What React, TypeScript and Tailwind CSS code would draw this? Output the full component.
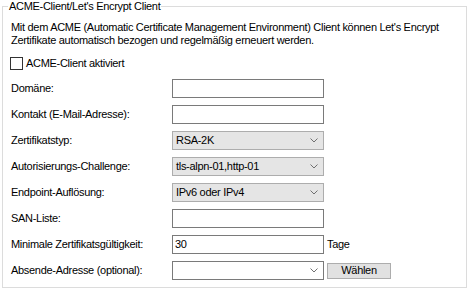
const font = "font-['Liberation_Sans',Arial,sans-serif] text-[11px] tracking-[-0.3px] leading-[13px] text-black"

function Chevron() {
  return (
    <svg width="8" height="5" viewBox="0 0 8 5" className="shrink-0">
      <path d="M0.5 0.5 L4 4 L7.5 0.5" fill="none" stroke="#707070" strokeWidth="1" />
    </svg>
  )
}

function TextBox({ value = '' }: { value?: string }) {
  return (
    <div className="w-[152px] h-[19px] border border-[#7a7a7a] bg-white flex items-center px-[2px]">
      {value}
    </div>
  )
}

function Select({ value, white = false }: { value: string; white?: boolean }) {
  return (
    <div
      className={
        white
          ? 'w-[152px] h-[19px] border border-[#7a7a7a] bg-white flex items-center justify-between pl-[3px] pr-[5px]'
          : 'w-[152px] h-[19px] border border-[#adadad] bg-[#e5e5e5] flex items-center justify-between pl-[3px] pr-[5px]'
      }
    >
      <span>{value}</span>
      <Chevron />
    </div>
  )
}

const rows: { label: string; control: React.ReactNode; extra?: React.ReactNode }[] = [
  { label: 'Domäne:', control: <TextBox /> },
  { label: 'Kontakt (E-Mail-Adresse):', control: <TextBox /> },
  { label: 'Zertifikatstyp:', control: <Select value="RSA-2K" /> },
  { label: 'Autorisierungs-Challenge:', control: <Select value="tls-alpn-01,http-01" /> },
  { label: 'Endpoint-Auflösung:', control: <Select value="IPv6 oder IPv4" /> },
  { label: 'SAN-Liste:', control: <TextBox /> },
  { label: 'Minimale Zertifikatsgültigkeit:', control: <TextBox value="30" />, extra: <span className="ml-[3px]">Tage</span> },
  {
    label: 'Absende-Adresse (optional):',
    control: <Select value="" white />,
    extra: (
      <div className="ml-[3px] w-[64px] h-[16px] border border-[#adadad] bg-[#e1e1e1] flex items-center justify-center">
        Wählen
      </div>
    ),
  },
]

export default function App() {
  return (
    <div className={`w-[470px] h-[293px] bg-white ${font}`}>
      <fieldset className="mx-[2px] w-[465px] h-[288px] border border-[#dcdcdc] pl-[7px] pr-2">
        <legend className="-ml-[2px] px-[1px] leading-[13px]">ACME-Client/Let's Encrypt Client</legend>

        <p className="mt-[8px] pl-px">
          Mit dem ACME (Automatic Certificate Management Environment) Client können Let's Encrypt
          <br />
          Zertifikate automatisch bezogen und regelmäßig erneuert werden.
        </p>

        <label className="mt-[10px] flex items-center gap-[3px]">
          <span className="w-[13px] h-[13px] border border-[#333] bg-white" />
          ACME-Client aktiviert
        </label>

        <div className="mt-[9px] flex flex-col gap-[7px]">
          {rows.map((r) => (
            <div key={r.label} className="flex items-center h-[19px]">
              <span className="w-[162px] pl-px">{r.label}</span>
              {r.control}
              {r.extra}
            </div>
          ))}
        </div>
      </fieldset>
    </div>
  )
}
